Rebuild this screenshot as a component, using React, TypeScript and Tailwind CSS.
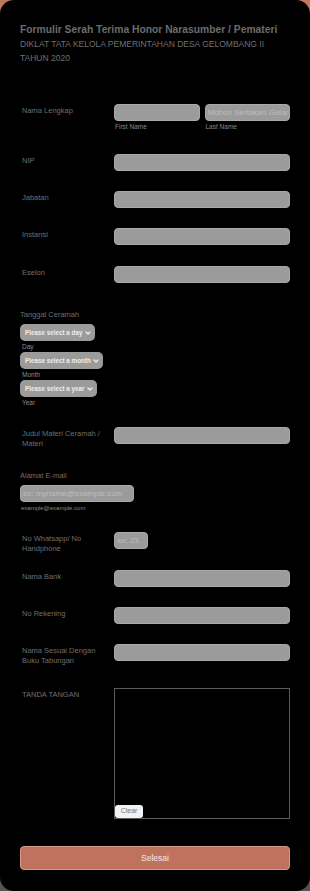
import { ChevronDown } from "lucide-react";

const font = { fontFamily: '"Liberation Sans", Arial, sans-serif' };

const Input = ({ placeholder, className = "" }: { placeholder?: string; className?: string }) => (
  <div
    className={`h-[17px] rounded-[4px] bg-[#9b9b9b] border border-[#a9a9a9] flex items-center px-[2px] text-[8px] text-[#bdbdbd] overflow-hidden whitespace-nowrap ${className}`}
  >
    {placeholder}
  </div>
);

const Row = ({ label, className = "", children }: { label: string; className?: string; children?: React.ReactNode }) => (
  <div className={`flex items-start ${className}`}>
    <div className="w-[94px] shrink-0 pl-[2px] pr-2 pt-[2px] text-[7.5px] leading-[10px] text-[#6f6f6f]">{label}</div>
    <div className="flex-1 min-w-0">{children}</div>
  </div>
);

const Select = ({ text, width }: { text: string; width: string }) => (
  <div className={`${width} h-[17px] rounded-[5px] bg-[#9b9b9b] flex items-center justify-between pl-[5px] pr-[3px] text-[6.3px] font-bold text-[#eeeeee] whitespace-nowrap`}>
    <span>{text}</span>
    <ChevronDown className="w-[8px] h-[8px] shrink-0" strokeWidth={4} color="#eeeeee" />
  </div>
);

export default function App() {
  return (
    <div className="w-[310px] h-[891px] bg-gradient-to-b from-[#c27762] to-[#57534e]" style={font}>
      <div className="w-full h-full bg-black rounded-[14px] px-5 pt-[23px]">
        <h1 className="text-[10.3px] font-bold leading-[13px] text-[#6c6c6c]">
          Formulir Serah Terima Honor Narasumber / Pemateri
        </h1>
        <p className="mt-[1px] text-[8.5px] leading-[14px] text-[#707070] pr-2">
          DIKLAT TATA KELOLA PEMERINTAHAN DESA GELOMBANG II TAHUN 2020
        </p>

        <Row label="Nama Lengkap" className="mt-[39px]">
          <div className="grid grid-cols-2 gap-[5px]">
            <div>
              <Input />
              <div className="mt-[2px] pl-[1px] text-[6.5px] leading-[8px] text-[#8a8a8a]">First Name</div>
            </div>
            <div>
              <Input placeholder="Mohon Sertakan Gelar" />
              <div className="mt-[2px] pl-[1px] text-[6.5px] leading-[8px] text-[#8a8a8a]">Last Name</div>
            </div>
          </div>
        </Row>

        <Row label="NIP" className="mt-[23px]"><Input /></Row>
        <Row label="Jabatan" className="mt-[20px]"><Input /></Row>
        <Row label="Instansi" className="mt-[20px]"><Input /></Row>
        <Row label="Eselon" className="mt-[21px]"><Input /></Row>

        <div className="mt-[27px] text-[7.5px] leading-[10px] text-[#6f6f6f]">Tanggal Ceramah</div>
        <div className="mt-[4px] flex flex-col items-start">
          <Select text="Please select a day" width="w-[75px]" />
          <div className="mt-[1px] pl-[2px] text-[6.5px] leading-[10px] text-[#8a8a8a]">Day</div>
          <Select text="Please select a month" width="w-[83px]" />
          <div className="mt-[1px] pl-[2px] text-[6.5px] leading-[10px] text-[#8a8a8a]">Month</div>
          <Select text="Please select a year" width="w-[77px]" />
          <div className="mt-[1px] pl-[2px] text-[6.5px] leading-[10px] text-[#8a8a8a]">Year</div>
        </div>

        <Row label="Judul Materi Ceramah / Materi" className="mt-[19px]"><Input /></Row>

        <div className="mt-[22px] text-[7.5px] leading-[10px] text-[#6f6f6f]">Alamat E-mail</div>
        <Input placeholder="ex: myname@example.com" className="mt-[4px] w-[114px]" />
        <div className="mt-[2px] pl-[1px] text-[6px] leading-[8px] text-[#8a8a8a]">example@example.com</div>

        <Row label="No Whatsapp/ No Handphone" className="mt-[20px]">
          <Input placeholder="ex: 23" className="w-[34px]" />
        </Row>
        <Row label="Nama Bank" className="mt-[16px]"><Input /></Row>
        <Row label="No Rekening" className="mt-[20px]"><Input /></Row>
        <Row label="Nama Sesuai Dengan Buku Tabungan" className="mt-[20px]"><Input /></Row>

        <Row label="TANDA TANGAN" className="mt-[22px]">
          <div className="h-[131px] border border-[#5c5c5c] flex flex-col justify-end">
            <button className="w-[28px] h-[13px] rounded-[3px] bg-[#f2f2f2] text-[7px] text-[#777]">Clear</button>
          </div>
        </Row>

        <button className="mt-[27px] w-full h-[24px] rounded-[4px] bg-[#bf735f] border border-[#d89a88] text-[8.5px] text-[#f3e6e2]">
          Selesai
        </button>
      </div>
    </div>
  );
}
